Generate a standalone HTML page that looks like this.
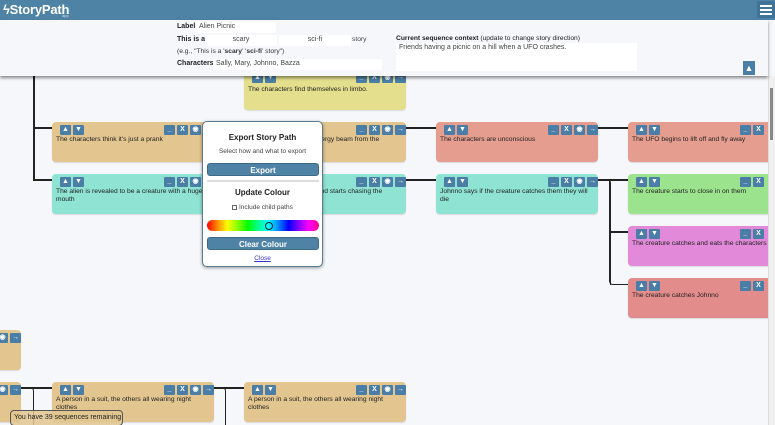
<!DOCTYPE html>
<html><head><style>
*{box-sizing:border-box;margin:0;padding:0}
html,body{width:775px;height:425px;overflow:hidden}
body{background:#f5f7fb;font-family:"Liberation Sans",sans-serif;position:relative;font-size:6.7px;color:#222}
#wrap{position:absolute;left:0;top:0;width:775px;height:425px;overflow:hidden}
.hdr{position:absolute;left:0;top:0;width:775px;height:20px;background:#4f83a5}
.logo{position:absolute;left:3px;top:2px;color:#fff;font-size:13px;font-weight:bold;letter-spacing:-0.2px}
.app{position:absolute;left:62px;top:13px;color:#dde;font-size:4px}
.menu{position:absolute;left:757px;top:1px;width:18px;height:17px;background:#3f7398}
.menu i{position:absolute;left:3px;width:12px;height:2px;background:#fff}
.panel{position:absolute;left:0;top:20px;width:768px;height:56px;background:#f6f7fb;box-shadow:0 2px 3px rgba(0,0,0,.45);z-index:5}
.lbl{position:absolute;font-weight:bold;font-size:7px}
.inp{position:absolute;background:#fff;font-size:7px;color:#444;padding:1px 3px;height:11px}
.card{position:absolute;width:162px;height:40px;border-radius:4px;padding:14px 2px 0 4px;line-height:8px;box-shadow:0 1px 1px rgba(0,0,0,.12)}
.b{position:absolute;top:3px;width:11px;height:10px;background:#4a7ea6;border-radius:1px;color:#fff;font-size:7px;font-weight:bold;text-align:center;line-height:10px}
.ln{position:absolute;background:#222}
.pop{position:absolute;left:202px;top:121px;width:121px;height:146px;background:#fff;border:1px solid #5a7d95;border-radius:5px;box-shadow:0 1px 3px rgba(0,0,0,.4);z-index:6;text-align:center}
.btn{position:absolute;left:4px;width:112px;height:13px;background:#4f83a5;border-radius:3px;color:#fff;font-weight:bold;font-size:8px;line-height:13px;border:1px solid #3d6a88}
</style></head><body><div id="wrap">
<div class="hdr"><div class="logo">&#x03DF;StoryPath</div><div class="app">app</div>
<div class="menu"><i style="top:4px"></i><i style="top:8px"></i><i style="top:12px"></i></div></div>

<div class="ln" style="left:33px;top:70px;width:2px;height:111px"></div>
<div class="ln" style="left:34px;top:127px;width:18px;height:2px"></div>
<div class="ln" style="left:34px;top:179px;width:18px;height:2px"></div>
<div class="ln" style="left:405px;top:127px;width:31px;height:1.5px"></div>
<div class="ln" style="left:405px;top:179px;width:31px;height:1.5px"></div>
<div class="ln" style="left:597px;top:127px;width:31px;height:1.5px"></div>
<div class="ln" style="left:597px;top:179px;width:31px;height:1.5px"></div>
<div style="position:absolute;left:600px;top:179px;width:11px;height:106px;border:1.5px solid #222;border-left:none;border-bottom:none;border-radius:0 4px 0 0"></div>
<div style="position:absolute;left:609px;top:180px;width:19px;height:105px;border:1.5px solid #222;border-right:none;border-top:none;border-radius:0 0 0 4px"></div>
<div class="ln" style="left:610px;top:231px;width:18px;height:1.5px"></div>
<div class="ln" style="left:21px;top:387px;width:31px;height:1.5px"></div>
<div style="position:absolute;left:24px;top:387px;width:10px;height:40px;border:1.5px solid #222;border-left:none;border-bottom:none;border-radius:0 4px 0 0"></div>
<div class="ln" style="left:213px;top:387px;width:31px;height:1.5px"></div>
<div style="position:absolute;left:214px;top:387px;width:12px;height:40px;border:1.5px solid #222;border-left:none;border-bottom:none;border-radius:0 4px 0 0"></div>

<div class="card" style="left:244px;top:70px;background:#e3df8c;padding-top:16px">The characters find themselves in limbo.</div>
<div class="card" style="left:52px;top:122px;background:#e2c58f">The characters think it's just a prank</div>
<div class="card" style="left:244px;top:122px;background:#e2c58f">A bright light emits an energy beam from the</div>
<div class="card" style="left:436px;top:122px;background:#e49d8e">The characters are unconscious</div>
<div class="card" style="left:628px;top:122px;background:#e49d8e">The UFO begins to lift off and fly away</div>
<div class="card" style="left:52px;top:174px;background:#8ee3d3">The alien is revealed to be a creature with a huge mouth</div>
<div class="card" style="left:244px;top:174px;background:#8ee3d3">The creature is hungry and starts chasing the</div>
<div class="card" style="left:436px;top:174px;background:#8ee3d3">Johnno says if the creature catches them they will die</div>
<div class="card" style="left:628px;top:174px;background:#9ce38d">The creature starts to close in on them</div>
<div class="card" style="left:628px;top:226px;background:#e28ad9">The creature catches and eats the characters</div>
<div class="card" style="left:628px;top:278px;background:#e38c8c">The creature catches Johnno</div>
<div class="card" style="left:-141px;top:330px;background:#e2c58f">The characters find themselves</div>
<div class="card" style="left:-141px;top:382px;background:#e2c58f">They are approached by</div>
<div class="card" style="left:52px;top:382px;background:#e2c58f">A person in a suit, the others all wearing night clothes</div>
<div class="card" style="left:244px;top:382px;background:#e2c58f">A person in a suit, the others all wearing night clothes</div>

<div id="btns"></div>

<div style="position:absolute;left:768px;top:76px;width:7px;height:349px;background:#f0f0f0;border-left:1px solid #ddd;z-index:4"></div>
<div style="position:absolute;left:770px;top:88px;width:3px;height:52px;background:#888;z-index:4"></div>

<div class="panel">
<span class="lbl" style="left:177px;top:3px">Label</span><div class="inp" style="left:196px;top:2px;width:80px">Alien Picnic</div>
<span class="lbl" style="left:177px;top:16px">This is a</span><div class="inp" style="left:205px;top:15px;width:72px;text-align:center">scary</div><div class="inp" style="left:279px;top:15px;width:72px;text-align:center">sci-fi</div><span style="position:absolute;left:352px;top:16px;color:#444">story</span>
<span style="position:absolute;left:177px;top:28px;color:#333">(e.g., "This is a '<b>scary</b>' '<b>sci-fi</b>' story")</span>
<span class="lbl" style="left:177px;top:40px">Characters</span><div class="inp" style="left:213px;top:39px;width:169px">Sally, Mary, Johnno, Bazza</div>
<span style="position:absolute;left:396px;top:15px"><b>Current sequence context</b> (update to change story direction)</span>
<div class="inp" style="left:396px;top:23px;width:241px;height:28px">Friends having a picnic on a hill when a UFO crashes.</div>
<div style="position:absolute;left:743px;top:41px;width:12px;height:14px;background:#4a7ea6;color:#fff;font-size:9px;text-align:center;line-height:14px">&#9650;</div>
</div>

<div class="pop">
<div style="position:absolute;top:11px;width:100%;font-weight:bold;font-size:8px">Export Story Path</div>
<div style="position:absolute;top:26px;width:100%;font-size:6.5px;color:#444">Select how and what to export</div>
<div class="btn" style="top:41px">Export</div>
<div style="position:absolute;left:4px;top:58px;width:112px;height:2px;background:#ddd"></div>
<div style="position:absolute;top:66px;width:100%;font-weight:bold;font-size:8px">Update Colour</div>
<div style="position:absolute;top:82px;width:100%;font-size:6.5px;color:#444"><span style="display:inline-block;width:5px;height:5px;border:1px solid #666;vertical-align:-1px"></span> Include child paths</div>
<div style="position:absolute;left:4px;top:98px;width:112px;height:11px;border-radius:6px;background:linear-gradient(90deg,#f00,#f80,#ff0,#8f0,#0f0,#0f8,#0ff,#08f,#00f,#80f,#f0f,#f08)"></div>
<div style="position:absolute;left:62px;top:100px;width:8px;height:8px;border-radius:50%;border:1.5px solid #222"></div>
<div class="btn" style="top:115px">Clear Colour</div>
<div style="position:absolute;top:133px;width:100%;font-size:6.5px;color:#33c;text-decoration:underline">Close</div>
</div>

<div style="position:absolute;left:10px;top:410px;width:113px;height:16px;background:rgba(226,197,143,.85);border:1px solid #555;border-radius:4px;font-size:7px;padding:3px 0 0 3px;z-index:7">You have 39 sequences remaining</div>
</div>
<script>
var cards=[[244,70],[52,122],[244,122],[436,122],[628,122],[52,174],[244,174],[436,174],[628,174],[628,226],[628,278],[-141,330],[-141,382],[52,382],[244,382]];
var h='';
cards.forEach(function(c){var x=c[0],y=c[1]+3;
[[8,'&#9650;'],[21,'&#9660;'],[112,'_'],[125,'X'],[138,'&#9673;'],[151,'&#8594;']].forEach(function(b){
var l=x+b[0]; if(l<-11||l>760)return;
h+='<span class="b" style="left:'+l+'px;top:'+y+'px">'+b[1]+'</span>';});});
document.getElementById('btns').innerHTML=h;
</script>
</body></html>
